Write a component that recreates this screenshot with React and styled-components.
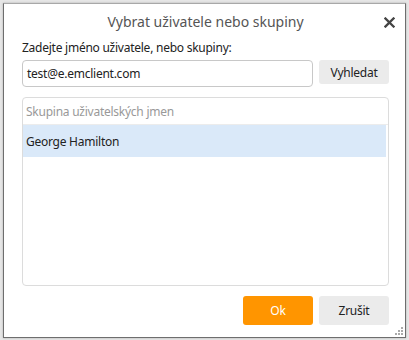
import React from "react";
import styled, { createGlobalStyle } from "styled-components";

const Global = createGlobalStyle`
  html, body { margin: 0; padding: 0; background: #e4e4e4; }
  body { font-family: "Noto Sans", "Open Sans", sans-serif; }
  * { box-sizing: border-box; }
`;

const Frame = styled.div`
  width: 409px;
  height: 340px;
  padding: 3px;
  background: #e6e6e6;
`;

const Window = styled.div`
  position: relative;
  width: 403px;
  height: 335px;
  background: #fff;
  border: 1px solid #6e6e6e;
  border-top-color: #a8a8a8;
  box-shadow: 0 0 2px rgba(0, 0, 0, 0.25);
  display: flex;
  flex-direction: column;
  padding: 0 16px 0 18px;
  letter-spacing: -0.25px;
`;

const TitleBar = styled.div`
  height: 34px;
  display: flex;
  align-items: center;
  justify-content: center;
  position: relative;
`;

const Title = styled.div`
  font-size: 14px;
  letter-spacing: 0;
  color: #555;
  margin-top: 1px;
`;

const Close = styled.button`
  position: absolute;
  right: -6px;
  top: 12px;
  width: 12px;
  height: 12px;
  padding: 0;
  border: none;
  background: transparent;
  display: flex;
  align-items: center;
  justify-content: center;
`;

const Label = styled.div`
  font-size: 12px;
  color: #222;
  line-height: 18px;
  height: 18px;
  margin-top: 1px;
  margin-bottom: 3px;
`;

const SearchRow = styled.div`
  display: flex;
  gap: 6px;
  align-items: flex-start;
`;

const Input = styled.div`
  flex: 1;
  height: 27px;
  border: 1px solid #c8c8c8;
  border-radius: 4px;
  font-size: 12px;
  color: #222;
  display: flex;
  align-items: center;
  padding-left: 4px;
`;

const Button = styled.button`
  width: 70px;
  height: ${(p) => p.$h || 24}px;
  border: none;
  border-radius: 3px;
  background: ${(p) => (p.$primary ? "#ff9500" : "#ebebeb")};
  color: ${(p) => (p.$primary ? "#fff" : "#222")};
  font-family: inherit;
  font-size: 12px;
  letter-spacing: inherit;
  padding: 0;
`;

const List = styled.div`
  margin-top: 10px;
  height: 189px;
  border: 1px solid #dcdcdc;
  border-radius: 4px;
  display: flex;
  flex-direction: column;
  padding-right: 2px;
`;

const ListHeader = styled.div`
  height: 27px;
  border-bottom: 1px solid #ececec;
  font-size: 12px;
  color: #999;
  display: flex;
  align-items: center;
  padding-left: 3px;
  margin-right: -2px;
`;

const Row = styled.div`
  height: 32px;
  font-size: 12px;
  color: #222;
  display: flex;
  align-items: center;
  padding-left: 3px;
  background: ${(p) => (p.$selected ? "#dae9f9" : "transparent")};
`;

const Footer = styled.div`
  margin-top: 10px;
  display: flex;
  justify-content: flex-end;
  gap: 6px;
`;

const Grip = styled.svg`
  position: absolute;
  right: 1px;
  bottom: 1px;
`;

export default function App() {
  return (
    <>
      <Global />
      <Frame>
        <Window>
          <TitleBar>
            <Title>Vybrat uživatele nebo skupiny</Title>
            <Close aria-label="Zavřít">
              <svg width="11" height="11" viewBox="0 0 11 11">
                <path d="M1.5 1.5 L9.5 9.5 M9.5 1.5 L1.5 9.5" stroke="#444" strokeWidth="2.3" strokeLinecap="square" />
              </svg>
            </Close>
          </TitleBar>
          <Label>Zadejte jméno uživatele, nebo skupiny:</Label>
          <SearchRow>
            <Input>test@e.emclient.com</Input>
            <Button>Vyhledat</Button>
          </SearchRow>
          <List>
            <ListHeader>Skupina uživatelských jmen</ListHeader>
            <Row $selected>George Hamilton</Row>
          </List>
          <Footer>
            <Button $primary $h={29}>Ok</Button>
            <Button $h={29}>Zrušit</Button>
          </Footer>
          <Grip width="9" height="9" viewBox="0 0 9 9">
            <rect x="6" y="0" width="2" height="2" fill="#aaa" />
            <rect x="3" y="3" width="2" height="2" fill="#aaa" />
            <rect x="6" y="3" width="2" height="2" fill="#aaa" />
            <rect x="0" y="6" width="2" height="2" fill="#aaa" />
            <rect x="3" y="6" width="2" height="2" fill="#aaa" />
            <rect x="6" y="6" width="2" height="2" fill="#aaa" />
          </Grip>
        </Window>
      </Frame>
    </>
  );
}
